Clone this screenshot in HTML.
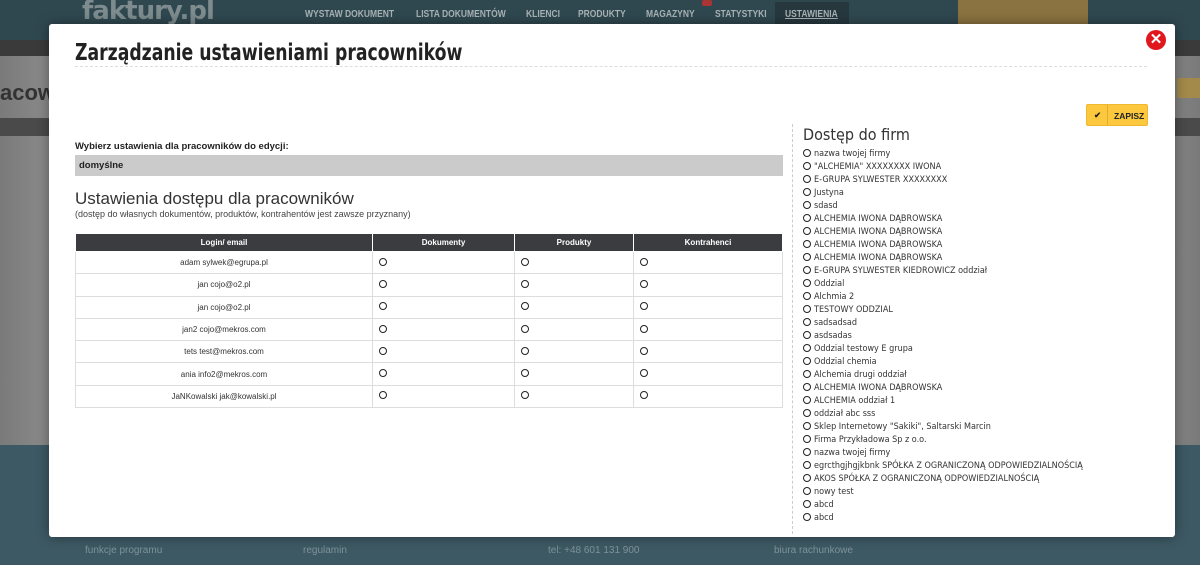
<!DOCTYPE html>
<html><head><meta charset="utf-8"><style>
*{margin:0;padding:0;box-sizing:border-box}
body{width:1200px;height:565px;overflow:hidden;position:relative;font-family:"Liberation Sans",sans-serif;background:#858585}
.nav{position:absolute;left:0;top:0;width:1200px;height:40px;background:#2f4850}
.logo{position:absolute;left:82px;top:-4px;font-size:26px;font-weight:bold;color:#7e8c8f;font-family:"DejaVu Sans",sans-serif;letter-spacing:-1px}
.menu{position:absolute;top:9px;font-size:10px;color:#a9b3b5;font-weight:bold;transform:scaleX(.85);transform-origin:left}
.body{position:absolute;left:0;top:40px;width:1200px;height:405px;background:linear-gradient(90deg,#7a7a7a,#8e8e8e 5%,#8e8e8e 95%,#7a7a7a)}
.foot{position:absolute;left:0;top:445px;width:1200px;height:120px;background:#3d5964}
.ft{position:absolute;top:545px;font-size:10px;color:#7f9299}
.modal{position:absolute;left:49px;top:24px;width:1126px;height:513px;background:#fff;border-radius:3px;box-shadow:0 0 12px rgba(0,0,0,.4)}
h1{position:absolute;left:26px;top:16px;font-size:23px;font-family:"DejaVu Sans",sans-serif;font-weight:bold;color:#222;transform:scaleX(.75);transform-origin:left;white-space:nowrap}
.hr{position:absolute;left:26px;top:42px;width:1072px;border-top:1px dashed #ddd}
.close{position:absolute;left:1097px;top:6px;width:20px;height:20px;border-radius:50%;background:#e0181d;color:#fff;text-align:center;font-weight:bold;font-size:15px;line-height:20px}
.btn{position:absolute;left:1037px;top:80px;width:62px;height:22px;background:#fcc93e;border:1px solid #f0b830;border-radius:2px;font-size:8.5px;font-weight:bold;color:#222}
.lbl{position:absolute;left:26px;top:117px;font-size:9.5px;font-weight:bold;color:#222}
.sel{position:absolute;left:26px;top:131px;width:708px;height:21px;background:#cbcbcb;font-size:9.5px;font-weight:bold;color:#222;padding:5px 4px}
h2{position:absolute;left:26px;top:165px;font-size:17px;font-weight:normal;color:#333}
.sub{position:absolute;left:26px;top:185px;font-size:9px;color:#444}
table{position:absolute;left:26px;top:209px;width:708px;border-collapse:collapse;font-size:8px;color:#333}
th{background:#3a3c40;color:#fff;height:18px;font-weight:bold;border:1px solid #fff}
td{height:22.3px;border:1px solid #ddd}
td.c{text-align:center}
.r{display:inline-block;width:8px;height:8px;border:1.5px solid #222;border-radius:50%;margin-left:6px}
.firms{position:absolute;left:743px;top:100px;border-left:1px dashed #ccc;padding-left:10px;height:410px}
.firms h3{font-size:16px;font-weight:normal;color:#333;font-family:"DejaVu Sans Condensed","DejaVu Sans",sans-serif;margin-bottom:4px;margin-top:1px}
.firms div{font-size:9px;height:13px;line-height:13px;color:#333;white-space:nowrap;font-family:"DejaVu Sans Condensed","DejaVu Sans",sans-serif}
.firms div .r{margin:0 3px 0 0;width:8px;height:8px;vertical-align:-1px}
</style></head><body>
<div class="nav"><div class="logo">faktury.pl</div>
<span class="menu" style="left:305px">WYSTAW DOKUMENT</span><span class="menu" style="left:416px">LISTA DOKUMENTÓW</span><span class="menu" style="left:526px">KLIENCI</span><span class="menu" style="left:578px">PRODUKTY</span><span class="menu" style="left:646px">MAGAZYNY</span><span class="menu" style="left:715px">STATYSTYKI</span>
<div style="position:absolute;left:775px;top:2px;width:74px;height:24px;background:#26383e"></div><span class="menu" style="left:785px;text-decoration:underline">USTAWIENIA</span>
<div style="position:absolute;left:702px;top:0;width:10px;height:6px;background:#a33;border-radius:2px"></div>
<div style="position:absolute;left:958px;top:0;width:130px;height:24px;background:#8a7340"></div></div>
<div class="body">
<div style="position:absolute;left:0;top:0;width:1200px;height:16px;background:#3a3a3a"></div>
<div style="position:absolute;left:0;top:40px;font-size:22px;font-weight:bold;color:#333">acown</div>
<div style="position:absolute;left:1177px;top:38px;width:30px;height:20px;background:#a38a4a"></div>
<div style="position:absolute;left:0;top:78px;width:1200px;height:18px;background:#4a4a4a"></div>
</div>
<div class="foot"></div>
<span class="ft" style="left:85px">funkcje programu</span><span class="ft" style="left:303px">regulamin</span><span class="ft" style="left:548px">tel: +48 601 131 900</span><span class="ft" style="left:774px">biura rachunkowe</span>
<div class="modal">
<h1>Zarządzanie ustawieniami pracowników</h1>
<div class="hr"></div>
<div class="close">✕</div>
<div class="btn"><span style="position:absolute;left:7px;top:5px">✔</span><span style="position:absolute;left:20px;top:0;height:20px;border-left:1px solid #e0ad2a"></span><span style="position:absolute;left:27px;top:6px">ZAPISZ</span></div>
<div class="lbl">Wybierz ustawienia dla pracowników do edycji:</div>
<div class="sel">domyślne</div>
<h2>Ustawienia dostępu dla pracowników</h2>
<div class="sub">(dostęp do własnych dokumentów, produktów, kontrahentów jest zawsze przyznany)</div>
<table>
<tr><th style="width:297px">Login/ email</th><th style="width:142px">Dokumenty</th><th style="width:119px">Produkty</th><th>Kontrahenci</th></tr>
<tr><td class="c">adam sylwek@egrupa.pl</td><td><span class="r"></span></td><td><span class="r"></span></td><td><span class="r"></span></td></tr>
<tr><td class="c">jan cojo@o2.pl</td><td><span class="r"></span></td><td><span class="r"></span></td><td><span class="r"></span></td></tr>
<tr><td class="c">jan cojo@o2.pl</td><td><span class="r"></span></td><td><span class="r"></span></td><td><span class="r"></span></td></tr>
<tr><td class="c">jan2 cojo@mekros.com</td><td><span class="r"></span></td><td><span class="r"></span></td><td><span class="r"></span></td></tr>
<tr><td class="c">tets test@mekros.com</td><td><span class="r"></span></td><td><span class="r"></span></td><td><span class="r"></span></td></tr>
<tr><td class="c">ania info2@mekros.com</td><td><span class="r"></span></td><td><span class="r"></span></td><td><span class="r"></span></td></tr>
<tr><td class="c">JaNKowalski jak@kowalski.pl</td><td><span class="r"></span></td><td><span class="r"></span></td><td><span class="r"></span></td></tr>
</table>
<div class="firms">
<h3>Dostęp do firm</h3>
<div><span class="r"></span>nazwa twojej firmy</div>
<div><span class="r"></span>"ALCHEMIA" XXXXXXXX IWONA</div>
<div><span class="r"></span>E-GRUPA SYLWESTER XXXXXXXX</div>
<div><span class="r"></span>Justyna</div>
<div><span class="r"></span>sdasd</div>
<div><span class="r"></span>ALCHEMIA IWONA DĄBROWSKA</div>
<div><span class="r"></span>ALCHEMIA IWONA DĄBROWSKA</div>
<div><span class="r"></span>ALCHEMIA IWONA DĄBROWSKA</div>
<div><span class="r"></span>ALCHEMIA IWONA DĄBROWSKA</div>
<div><span class="r"></span>E-GRUPA SYLWESTER KIEDROWICZ oddział</div>
<div><span class="r"></span>Oddzial</div>
<div><span class="r"></span>Alchmia 2</div>
<div><span class="r"></span>TESTOWY ODDZIAL</div>
<div><span class="r"></span>sadsadsad</div>
<div><span class="r"></span>asdsadas</div>
<div><span class="r"></span>Oddzial testowy E grupa</div>
<div><span class="r"></span>Oddzial chemia</div>
<div><span class="r"></span>Alchemia drugi oddział</div>
<div><span class="r"></span>ALCHEMIA IWONA DĄBROWSKA</div>
<div><span class="r"></span>ALCHEMIA oddział 1</div>
<div><span class="r"></span>oddział abc sss</div>
<div><span class="r"></span>Sklep Internetowy "Sakiki", Saltarski Marcin</div>
<div><span class="r"></span>Firma Przykładowa Sp z o.o.</div>
<div><span class="r"></span>nazwa twojej firmy</div>
<div><span class="r"></span>egrcthgjhgjkbnk SPÓŁKA Z OGRANICZONĄ ODPOWIEDZIALNOŚCIĄ</div>
<div><span class="r"></span>AKOS SPÓŁKA Z OGRANICZONĄ ODPOWIEDZIALNOŚCIĄ</div>
<div><span class="r"></span>nowy test</div>
<div><span class="r"></span>abcd</div>
<div><span class="r"></span>abcd</div>
</div>
</div>
</body></html>
